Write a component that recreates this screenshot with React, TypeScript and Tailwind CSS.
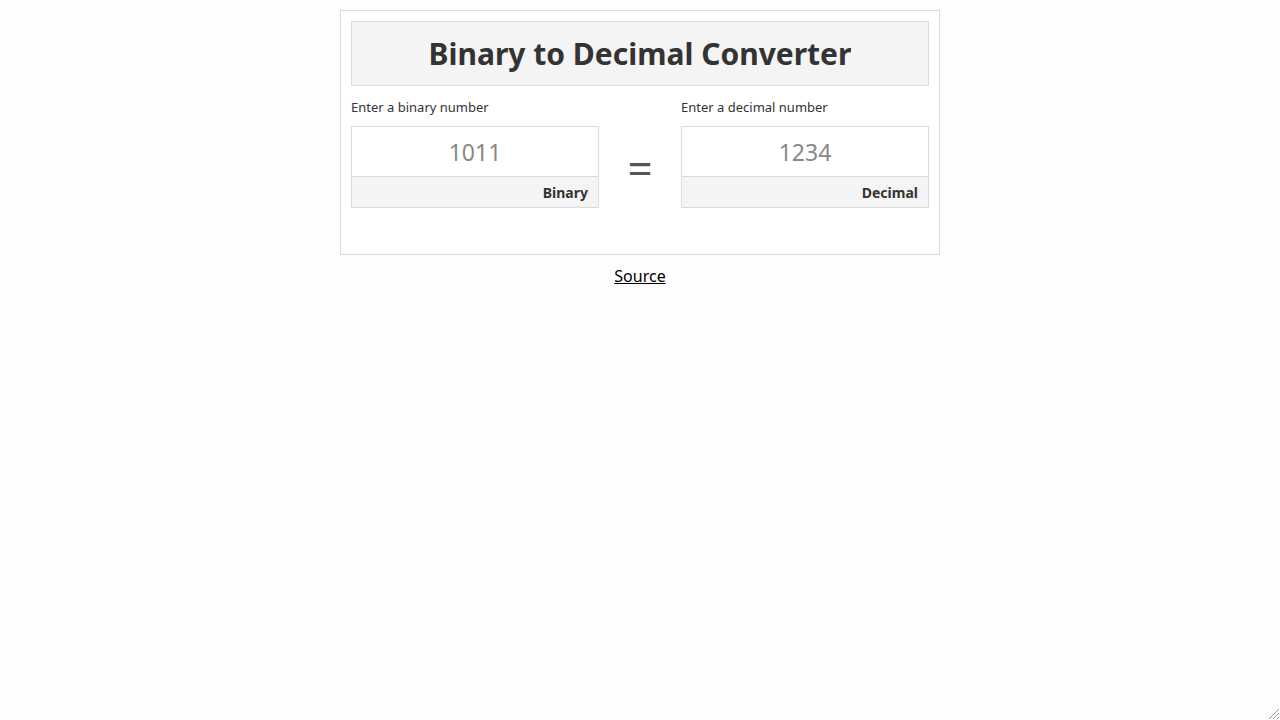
import { useState } from 'react';

function Field({ label, value, unit, onChange }: { label: string; value: string; unit: string; onChange: (v: string) => void }) {
  return (
    <div className="flex w-[248px] flex-col">
      <label className="mb-[8px] text-[13px] leading-[22px] text-[#333]">{label}</label>
      <div className="flex flex-col border border-[#dcdcdc]">
        <input
          value={value}
          onChange={e => onChange(e.target.value)}
          className="h-[49px] w-full bg-white text-center text-[23px] text-[#888] outline-none"
        />
        <div className="flex h-[31px] items-center justify-end border-t border-[#dcdcdc] bg-[#f4f4f4] pr-[10px] text-[14px] font-bold text-[#333]">
          {unit}
        </div>
      </div>
    </div>
  );
}

export default function App() {
  const [bin, setBin] = useState('1011');
  const [dec, setDec] = useState('1234');

  return (
    <div className="relative min-h-[720px] bg-[#fdfdfd] pt-[10px] font-['Noto_Sans',sans-serif]">
      <div className="mx-auto w-[600px] border border-[#dcdcdc] bg-white p-[10px] pb-[46px]">
        <div className="flex h-[65px] items-center justify-center border border-[#dcdcdc] bg-[#f4f4f4]">
          <h1 className="text-[30px] font-bold text-[#333]">Binary to Decimal Converter</h1>
        </div>
        <div className="mt-[10px] flex items-start justify-between">
          <Field label="Enter a binary number" value={bin} unit="Binary" onChange={setBin} />
          <div className="flex h-[112px] w-[82px] items-end justify-center pb-[18px] text-[44px] leading-none text-[#555]">=</div>
          <Field label="Enter a decimal number" value={dec} unit="Decimal" onChange={setDec} />
        </div>
      </div>
      <div className="mt-[9px] text-center">
        <a href="#" className="text-[16px] text-black underline">Source</a>
      </div>
      <svg className="absolute bottom-0 right-0" width="14" height="14" viewBox="0 0 14 14">
        <path d="M13 3 L3 13 M13 7 L7 13 M13 11 L11 13" stroke="#999" strokeWidth="1" />
      </svg>
    </div>
  );
}
